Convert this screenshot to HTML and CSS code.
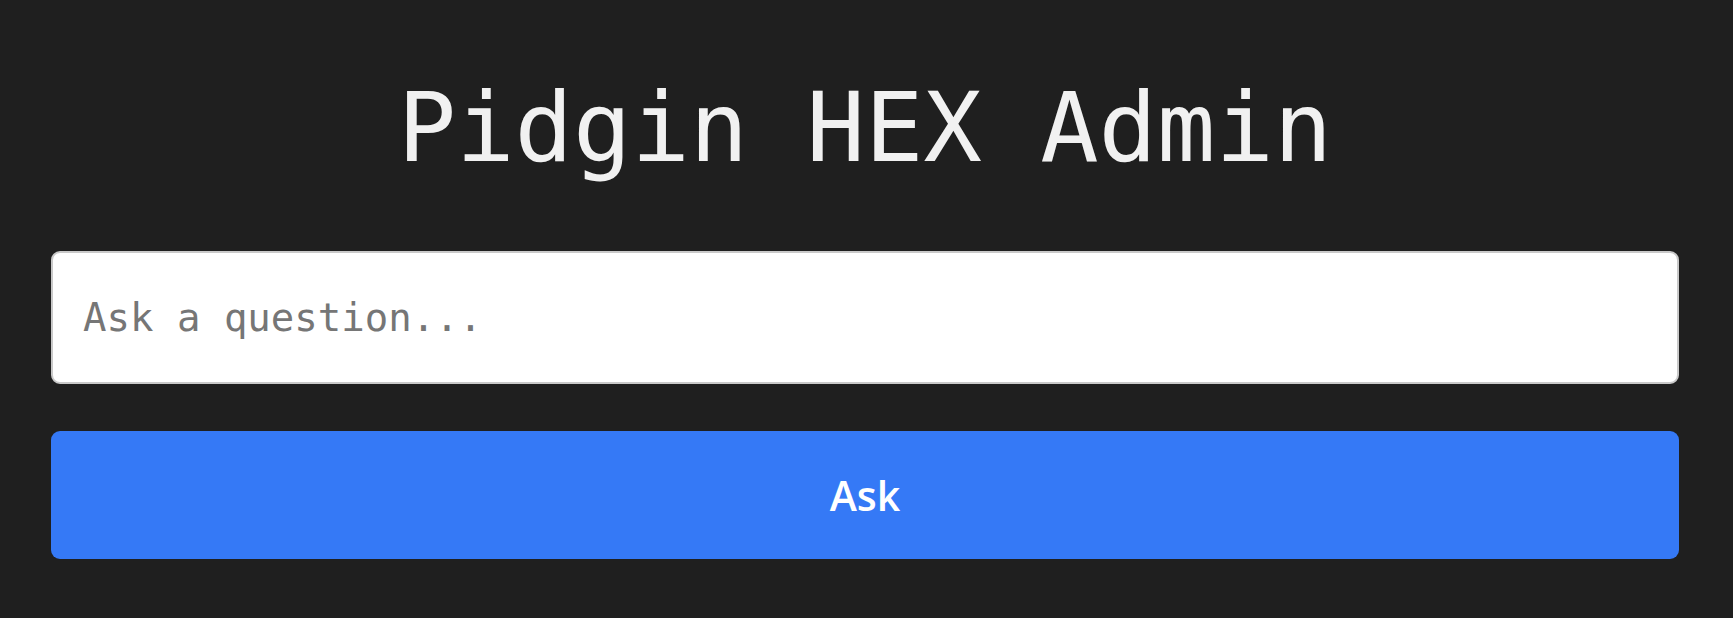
FILE: index.html
```html
<!DOCTYPE html>
<html lang="en">
<head>
<meta charset="utf-8">
<title>Pidgin HEX Admin</title>
<link rel="stylesheet" href="styles.css">
</head>
<body>
<main class="page">
  <h1 class="title">Pidgin HEX Admin</h1>
  <form class="ask-form" onsubmit="return false;">
    <input class="question" type="text" placeholder="Ask a question...">
    <button class="ask-btn" type="submit">Ask</button>
  </form>
</main>
</body>
</html>
```
FILE: styles.css
```css
html, body {
  margin: 0;
  padding: 0;
  background: #1f1f1f;
  height: 100%;
}
.page {
  box-sizing: border-box;
  height: 100%;
  padding: 71px 54px 0 51px;
  display: flex;
  flex-direction: column;
  font-family: "DejaVu Sans Mono", "Liberation Mono", monospace;
}
.title {
  margin: 0;
  text-align: center;
  color: #f1f1f1;
  font-weight: 400;
  font-size: 97px;
  line-height: 113px;
  font-family: "DejaVu Sans Mono", monospace;
}
.ask-form {
  margin-top: 67px;
  display: flex;
  flex-direction: column;
  gap: 47px;
}
.question {
  box-sizing: border-box;
  height: 133px;
  width: 100%;
  border: 2px solid #c9c9c9;
  border-radius: 9px;
  background: #ffffff;
  padding: 0 30px;
  font-family: "DejaVu Sans Mono", monospace;
  font-size: 39px;
  color: #222;
  outline: none;
}
.question::placeholder {
  color: #767676;
}
.ask-btn {
  box-sizing: border-box;
  height: 128px;
  width: 100%;
  border: none;
  border-radius: 9px;
  background: #3579f6;
  color: #ffffff;
  font-family: "Open Sans", "Noto Sans", sans-serif;
  font-weight: 600;
  font-size: 41px;
  cursor: pointer;
}
```
